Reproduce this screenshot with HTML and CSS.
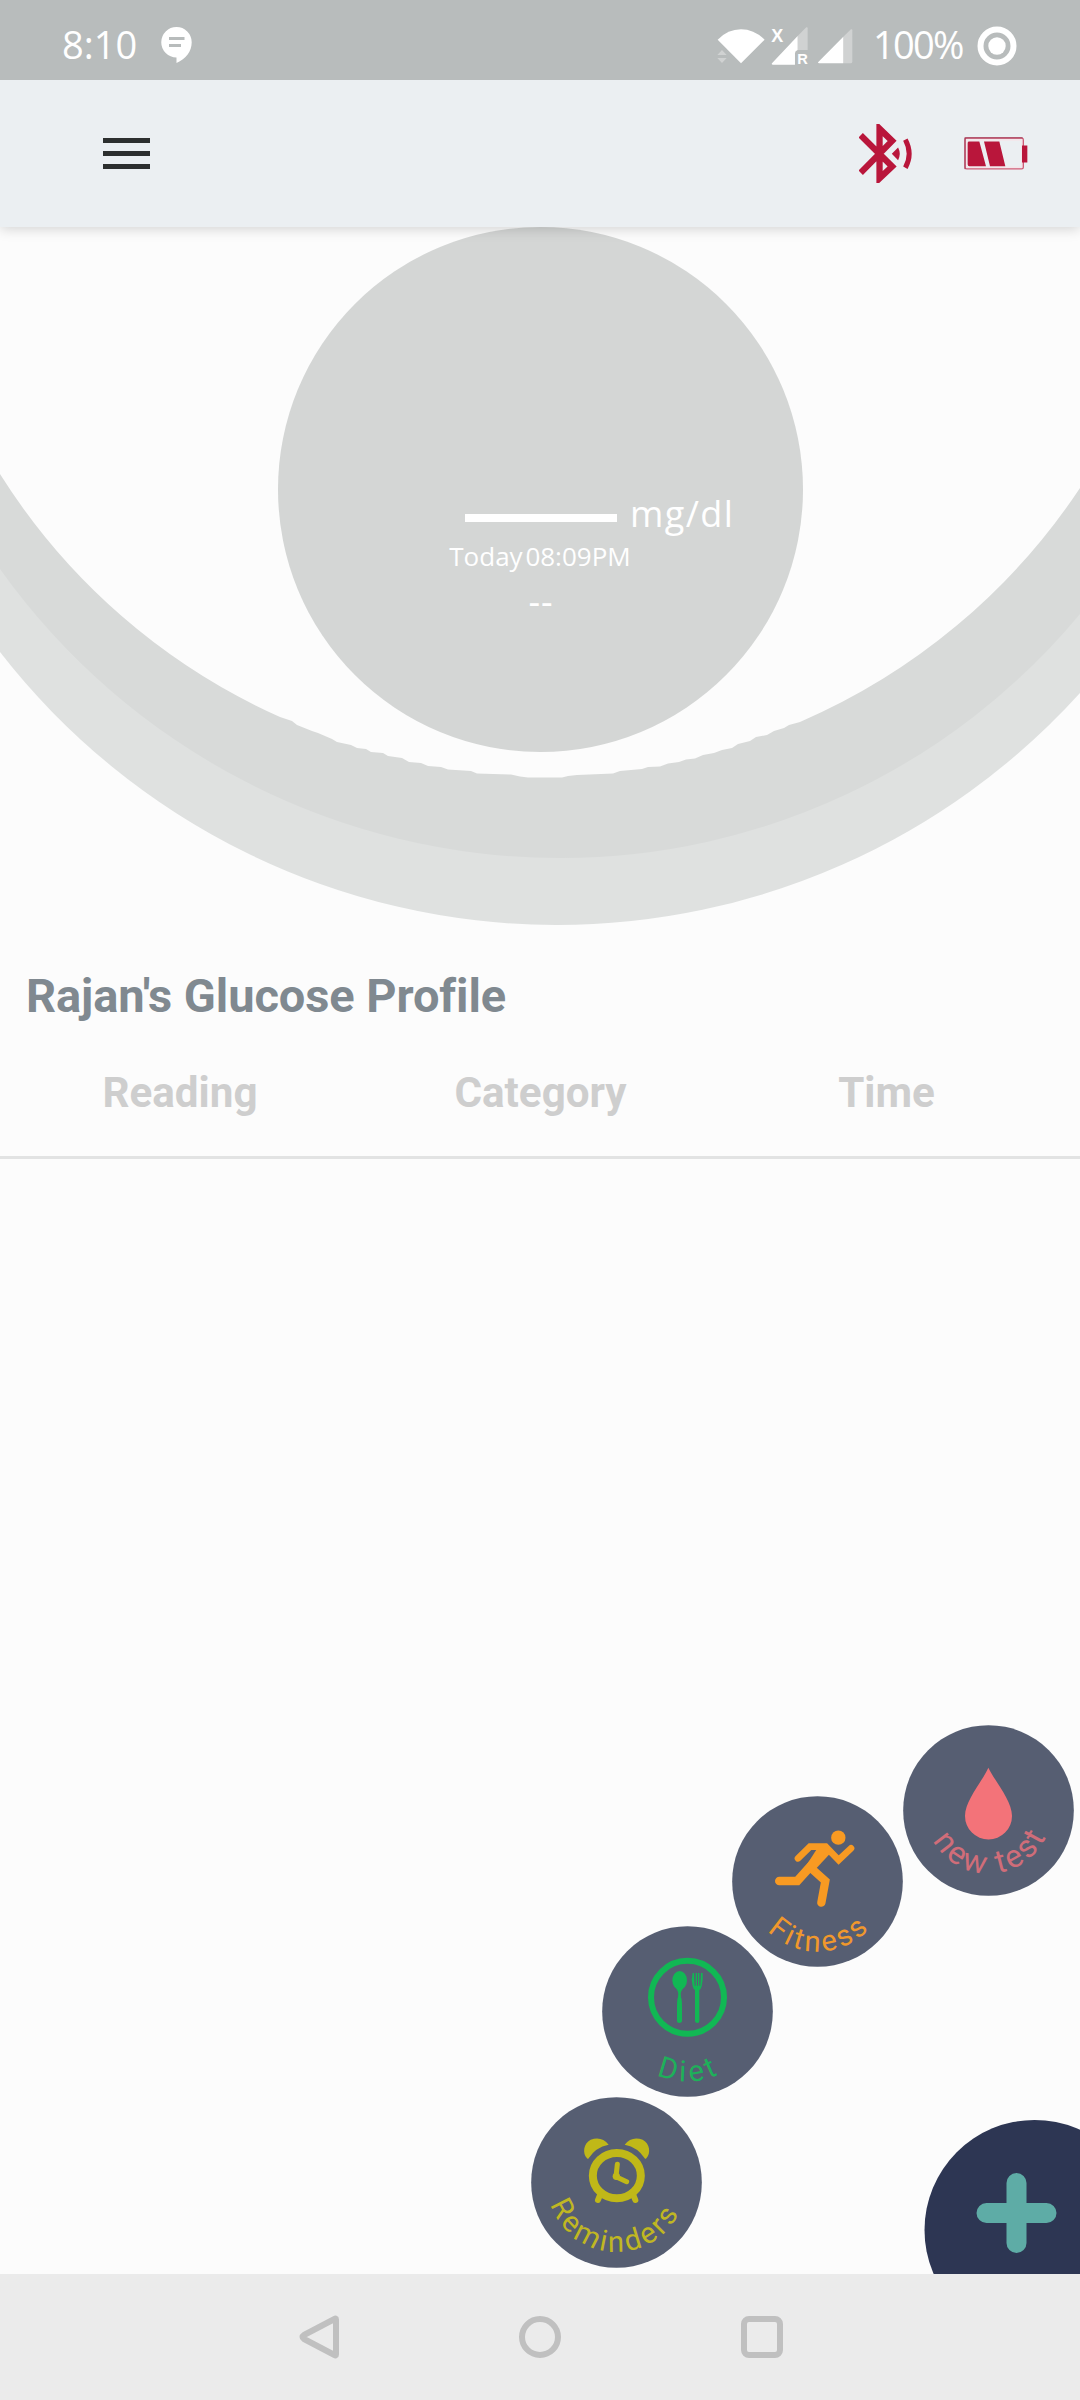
FILE: index.html
```html
<!DOCTYPE html>
<html lang="en">
<head>
<meta charset="utf-8">
<title>Glucose Profile</title>
<link rel="stylesheet" href="styles.css">
</head>
<body>
<div class="screen">
  <div class="status">
    <span class="clock">8:10</span>
    <svg class="chat" viewBox="0 0 31 37"><path fill="#fff" d="M15.500 0a15.200 15.200 0 0 1 15.200 15.200c0 9-5.600 16.500-15.200 20.800v-5.500A15.200 15.200 0 0 1 15.500 0z"/><path stroke="#b8bcbc" stroke-width="3" d="M8 11.500h15.500M8 18.500h12"/></svg>
    <svg class="signals" viewBox="112 78 412 120">
      <path fill="#fff" d="M114 119Q145 88 184 88T255 119L184 190z"/>
      <path fill="#d0d2d2" d="M127 150l14 15h-28zM127 189l14-15h-28z"/>
      <path fill="#d0d2d2" d="M354 108L380 82q4-2 4 3V150H354z"/>
      <path fill="#fff" d="M354 108v42q-8 2-8 10v34H279q-5-1-2-4z"/>
      <path fill="#d0d2d2" d="M491 110L514 88q4-2 4 3v94q0 5-5 5H491z"/>
      <path fill="#fff" d="M491 110v80H418q-5-1-2-4z"/>
      <text class="tiny" x="275" y="126" font-size="54">X</text>
      <text class="tiny" x="353" y="193" font-size="44">R</text>
    </svg>
    <span class="percent">100%</span>
    <svg class="ring" viewBox="0 0 40 40"><circle cx="20" cy="20" r="16.500" fill="none" stroke="#fff" stroke-width="6"/><circle cx="20" cy="20" r="8.700" fill="#fff"/></svg>
  </div>

  <div class="appbar">
    <div class="menu"><i></i><i></i><i></i></div>
    <svg class="bt" viewBox="534 371 160 176">
      <g fill="none" stroke="#b9163b">
        <path stroke-width="19" d="M539 404L634 498 596 534V384L634 421 539 517"/>
        <path stroke-width="15" d="M674 417Q697 460 674 502"/>
      </g>
      <path fill="#b9163b" d="M633 460L652 441Q662 460 652 479z"/>
    </svg>
    <svg class="battery" viewBox="851 410 192 98">
      <rect x="854" y="413" width="175" height="92" rx="5" fill="#f3e6eb" stroke="#cf5c77" stroke-width="4"/>
      <path d="M853 412h174M854 412v94" stroke="#9e3450" stroke-width="3"/>
      <rect x="862" y="421" width="160" height="77" fill="#ebeff2"/>
      <path fill="#b9163b" d="M865 423h32l20 74h-50q-5 0-5-6v-62q0-6 3-6zM911 423h46l18 74h-46zM1025 435h16v51h-16z"/>
    </svg>
  </div>

  <div class="gauge">
    <svg class="arcs" viewBox="0 227 1080 700">
      <path fill="#dfe1e0" d="M0 652A706 706 0 0 0 556 925A706 706 0 0 0 1080 693V400H0z"/>
      <path fill="#d8dad9" d="M0 569A688 688 0 0 0 561 858A676 676 0 0 0 1080 614V400H0z"/>
      <path fill="#fcfcfc" d="M0 474A638 638 0 0 0 280 717L292 721 297 725 312 731 318 733 332 739 337 742 351 745 357 748 366 749 371 752 383 753 388 756 402 758 409 762 421 763 428 766 441 767 448 769.500 471 771 477 773.500 511 774.500 520 776.500 528 777.500H562L568 776 577 775 613 773.500 620 771 642 769 648 767 660 766.500 668 763.500 679 762 686 759.500 695 758.500 703 755 714 753 722 750 732 748 738 744 750 741 756 737 767 735 774 731 784 728 789 725 800 722A641 641 0 0 0 1080 488V227H0z"/>
      <circle cx="540.500" cy="489.500" r="262.500" fill="#d4d6d5"/>
    </svg>
    <div class="reading">
      <div class="value"><i class="blank"></i><span>mg/dl</span></div>
      <div class="when">Today 08:09PM</div>
      <div class="trend">--</div>
    </div>
  </div>

  <h1 class="title">Rajan's Glucose Profile</h1>
  <div class="columns"><span>Reading</span><span>Category</span><span>Time</span></div>

  <div class="list">
    <svg class="fab newtest" viewBox="69 75 513 513">
      <circle cx="325.500" cy="331.500" r="256" fill="#565e72"/>
      <path fill="#f37379" d="M325 203C347 247 396 302 396 348a70 70 0 0 1-141 0C255 302 305 247 325 203z"/>
      <path id="c1" fill="none" d="M135.500 331a190 190 0 0 0 380 0"/>
      <text class="arc" fill="#d06d79" transform="rotate(-3 325 331)"><textPath href="#c1" startOffset="50%">new test</textPath></text>
    </svg>
    <svg class="fab fitness" viewBox="66 48 513 513">
      <circle cx="322.500" cy="304.500" r="256" fill="#565e72"/>
      <circle cx="385" cy="173" r="21.500" fill="#f89a22"/>
      <g fill="none" stroke="#f89a22" stroke-linecap="round">
        <path stroke-width="20" d="M264 235L300 200H347L386 240 423 205"/>
        <path stroke-width="26" d="M208 303H262L340 216"/>
        <path stroke-width="25" d="M306 267L346 303 334 368"/>
      </g>
      <path fill="#f89a22" d="M320 208L347 191 361 220 322 262 305 280 284 264z"/>
      <path id="c2" fill="none" d="M111.500 304a211 211 0 0 0 422 0"/>
      <text class="arc" fill="#f0982c" transform="rotate(-2 322 304)"><textPath href="#c2" startOffset="50%">Fitness</textPath></text>
    </svg>
    <svg class="fab diet" viewBox="66 48 513 513">
      <circle cx="322.500" cy="304.500" r="256" fill="#565e72"/>
      <circle cx="322.500" cy="262" r="109.500" fill="none" stroke="#11b854" stroke-width="18"/>
      <g fill="#11b854">
        <ellipse cx="299" cy="211" rx="22" ry="28"/>
        <path d="M286 232Q298 245 294 262 291 268 291 290V334q0 5 7 5t8-5V290q0-22-3-28-4-17 9-30z"/>
        <path d="M338 189h4l2 38h3V189h4v38h3V189h4v38h3l2-38h5v20l-3 20q-2 8-7 11v94q0 5-6 5t-7-5V240q-5-3-7-11l-3-20z"/>
      </g>
      <path id="c3" fill="none" d="M111.500 304a211 211 0 0 0 422 0"/>
      <text class="arc" fill="#1eb05a" transform="rotate(-1.500 322 304)"><textPath href="#c3" startOffset="50%">Diet</textPath></text>
    </svg>
    <svg class="fab reminders" viewBox="63 51 513 513">
      <circle cx="319.500" cy="307.500" r="256" fill="#565e72"/>
      <ellipse cx="320.500" cy="287" rx="72" ry="68" fill="none" stroke="#c0b818" stroke-width="24"/>
      <g fill="#c0b818">
        <path id="bell" d="M231 235C217 220 220 190 242 179Q275 167 296 194 256 202 236 235q-2 3-5 0z"/>
        <use href="#bell" transform="translate(640 0) scale(-1 1)"/>
      </g>
      <path fill="none" stroke="#c0b818" stroke-width="15" stroke-linecap="round" stroke-linejoin="round" d="M322 253L318 290 350 305"/>
      <circle cx="319" cy="289" r="11" fill="#c0b818"/>
      <path stroke="#c0b818" stroke-width="18" stroke-linecap="round" d="M270 345L264 360M370 345L376 360"/>
      <path id="c4" fill="none" d="M111 307a209 209 0 0 0 418 0"/>
      <text class="arc" fill="#c0b722" transform="rotate(3 320 307)"><textPath href="#c4" startOffset="50%">Reminders</textPath></text>
    </svg>
    <svg class="add" viewBox="0 0 156 154"><circle cx="110.500" cy="110" r="110" fill="#2d3653"/><path stroke="#5eaca6" stroke-width="20" stroke-linecap="round" d="M92.500 63v60M62.500 93h60"/></svg>
  </div>

  <div class="nav">
    <svg viewBox="0 0 50 50"><path d="M43 7.500v35q0 1.500-1.500.5L11 27q-3-2 0-4L41.500 7q1.500-1 1.500.500z"/></svg>
    <svg viewBox="0 0 50 50"><circle cx="25" cy="25" r="18"/></svg>
    <svg viewBox="0 0 50 50"><rect x="7" y="7" width="36" height="36" rx="5"/></svg>
  </div>
</div>
</body>
</html>
```
FILE: styles.css
```css
* { box-sizing: border-box; }
body { margin: 0; background: #fcfcfc; font-family: Roboto, "Noto Sans", sans-serif; }
.screen { width: 1080px; height: 2400px; display: flex; flex-direction: column; overflow: hidden; }
svg { display: block; flex: none; }

.status { height: 80px; position: relative; z-index: 2; background: #b8bcbc; display: flex; align-items: center; padding: 0 63px 0 62px; color: #fff; font: 400 38px/54px "Open Sans", "Noto Sans", sans-serif; }
.clock { width: 95px; padding-top: 8px; letter-spacing: 0; }
.chat { width: 31px; height: 37px; margin: 11px 0 0 4px; }
.signals { width: 137.300px; height: 40px; margin: 12px 0 0 auto; }
.tiny { font-family: "Liberation Sans", sans-serif; font-weight: 700; fill: #fff; }
.percent { width: 104px; padding-top: 8px; margin-left: 19px; letter-spacing: -1.700px; }
.ring { width: 40px; height: 40px; margin: 11px 0 0; }

.appbar { height: 147px; background: #ebeff2; display: flex; align-items: center; padding: 0 52px 0 103px; position: relative; z-index: 1; box-shadow: 0 2px 12px rgba(0, 0, 0, .17); }
.menu { display: grid; gap: 8px; width: 47px; margin-right: auto; }
.menu i { height: 5px; background: #2c2f2f; }
.bt { width: 53px; height: 59px; }
.battery { width: 64px; height: 33px; margin-left: 52px; }

.gauge { position: relative; height: 700px; padding-top: 262px; }
.arcs { position: absolute; inset: 0; width: 1080px; height: 700px; }
.reading { position: relative; color: #fff; font-family: "Open Sans", "Noto Sans", sans-serif; text-align: center; }
.value { display: flex; align-items: center; height: 49px; padding-left: 465px; font-size: 36px; line-height: 50px; letter-spacing: 1.400px; }
.blank { width: 152px; height: 8px; margin: 9px 13px 0 0; background: #fff; }
.when { height: 39px; font-size: 26px; line-height: 36px; word-spacing: -4px; }
.trend { font-size: 36px; line-height: 50px; letter-spacing: 1px; padding-left: 2px; }

.title { margin: 0; padding: 39px 26px 0; height: 135px; font-size: 47px; line-height: 60px; letter-spacing: -0.070px; color: #808990; }
.columns { height: 97px; padding-top: 1px; border-bottom: 3px solid #e2e3e3; display: grid; grid-template-columns: 360px 361px 331px; text-align: center; color: #cecece; font-weight: 700; font-size: 42.200px; line-height: 60px; }

.list { flex: 1; position: relative; }
.fab { position: absolute; width: 171px; height: 171px; }
.newtest { left: 903px; top: 566px; }
.fitness { left: 732px; top: 637px; }
.diet { left: 602px; top: 767px; }
.reminders { left: 531px; top: 938px; }
.add { position: absolute; left: 924px; bottom: 0; width: 156px; height: 154px; }
.arc { font: 400 88px Roboto, sans-serif; letter-spacing: 9px; text-anchor: middle; }
.newtest .arc { font-size: 96px; letter-spacing: 8px; }
.diet .arc { letter-spacing: 12px; }

.nav { height: 126px; background: #ebebeb; display: flex; justify-content: center; align-items: center; gap: 172px; }
.nav svg { width: 50px; height: 50px; fill: none; stroke: #c0c0c0; stroke-width: 6; stroke-linejoin: round; }
```
